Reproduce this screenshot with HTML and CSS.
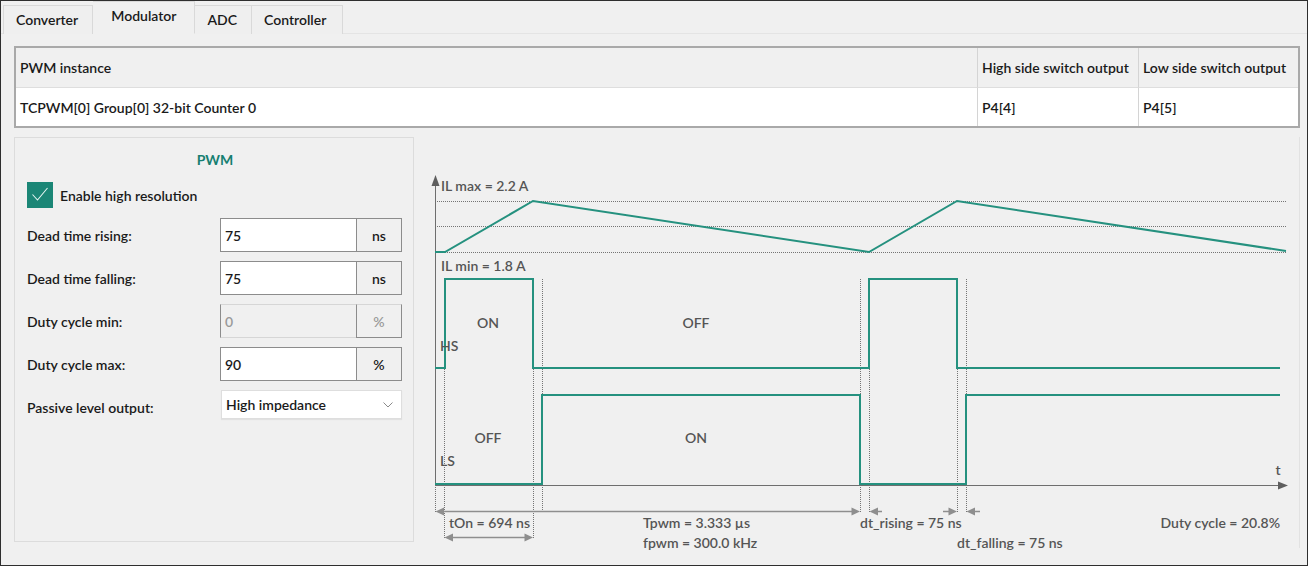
FILE: index.html
```html
<!DOCTYPE html>
<html>
<head>
<meta charset="utf-8">
<title>Modulator</title>
<link rel="stylesheet" href="styles.css">
</head>
<body>
<div class="window">
  <div class="tabbar">
    <div class="tab">Converter</div>
    <div class="tab active">Modulator</div>
    <div class="tab">ADC</div>
    <div class="tab">Controller</div>
  </div>
  <div class="pane">
    <table class="pwm-table">
      <colgroup><col class="c1"><col class="c2"><col class="c3"></colgroup>
      <thead>
        <tr><th>PWM instance</th><th>High side switch output</th><th>Low side switch output</th></tr>
      </thead>
      <tbody>
        <tr><td>TCPWM[0] Group[0] 32-bit Counter 0</td><td>P4[4]</td><td>P4[5]</td></tr>
      </tbody>
    </table>
    <div class="lower">
      <section class="group">
        <div class="group-title">PWM</div>
        <div class="check-row">
          <span class="checkbox"><svg width="26" height="26" viewBox="0 0 26 26"><polyline points="5.5,12.5 10.5,18 20.5,6" fill="none" stroke="#e6f5f2" stroke-width="1.1"/></svg></span>
          <span>Enable high resolution</span>
        </div>
        <div class="form">
          <div class="label">Dead time rising:</div>
          <div class="field"><div class="input">75</div><div class="unit">ns</div></div>
          <div class="label">Dead time falling:</div>
          <div class="field"><div class="input">75</div><div class="unit">ns</div></div>
          <div class="label">Duty cycle min:</div>
          <div class="field disabled"><div class="input">0</div><div class="unit">%</div></div>
          <div class="label">Duty cycle max:</div>
          <div class="field"><div class="input">90</div><div class="unit">%</div></div>
          <div class="label">Passive level output:</div>
          <div class="select"><span>High impedance</span><svg width="10" height="6" viewBox="0 0 10 6"><polyline points="0.5,0.5 5,5 9.5,0.5" fill="none" stroke="#8a8a8a" stroke-width="1"/></svg></div>
        </div>
      </section>
      <div class="chart">
        <svg class="plot" width="880" height="405" viewBox="420 137 880 405">
          <line class="frame" x1="1299.5" y1="137" x2="1299.5" y2="548"/>
          <!-- current limit lines -->
          <line class="dot" x1="435" y1="201.5" x2="1286" y2="201.5"/>
          <line class="dot" x1="435" y1="226.5" x2="1286" y2="226.5"/>
          <line class="dot" x1="435" y1="252.5" x2="1286" y2="252.5"/>
          <!-- timing markers -->
          <line class="dot" x1="435.5" y1="279" x2="435.5" y2="512"/>
          <line class="dot" x1="444.5" y1="279" x2="444.5" y2="538"/>
          <line class="dot" x1="533.5" y1="279" x2="533.5" y2="538"/>
          <line class="dot" x1="542.5" y1="279" x2="542.5" y2="512"/>
          <line class="dot" x1="860.5" y1="279" x2="860.5" y2="512"/>
          <line class="dot" x1="869.5" y1="279" x2="869.5" y2="512"/>
          <line class="dot" x1="957.5" y1="279" x2="957.5" y2="512"/>
          <line class="dot" x1="966.5" y1="279" x2="966.5" y2="512"/>
          <!-- axes -->
          <line class="axis" x1="435.5" y1="184" x2="435.5" y2="486"/>
          <polygon class="axhead" points="435.5,175 431.5,186 439.5,186"/>
          <line class="axis" x1="435" y1="485.5" x2="1279" y2="485.5"/>
          <polygon class="axhead" points="1288,485.5 1278,481.5 1278,489.5"/>
          <!-- signals -->
          <polyline class="sig" points="435,252 445,252 533,201 869,252 957,201 1286,251"/>
          <polyline class="sig" points="435,368 445,368 445,279 533,279 533,368 869,368 869,279 957,279 957,368 1280,368"/>
          <polyline class="sig" points="435,484 542,484 542,395 860,395 860,484 966,484 966,395 1280,395"/>
          <!-- dimension arrows -->
          <line class="arrow" x1="440" y1="511.5" x2="855" y2="511.5"/>
          <polygon class="ahead" points="435.5,511.5 444,507.5 444,515.5"/>
          <polygon class="ahead" points="860,511.5 851.5,507.5 851.5,515.5"/>
          <line class="arrow" x1="449" y1="537.5" x2="528" y2="537.5"/>
          <polygon class="ahead" points="444.5,537.5 453,533.5 453,541.5"/>
          <polygon class="ahead" points="533,537.5 524.5,533.5 524.5,541.5"/>
          <line class="arrow" x1="875" y1="511.5" x2="882" y2="511.5"/>
          <polygon class="ahead" points="869.5,511.5 878,507.5 878,515.5"/>
          <line class="arrow" x1="943" y1="511.5" x2="952" y2="511.5"/>
          <polygon class="ahead" points="957,511.5 948.5,507.5 948.5,515.5"/>
          <line class="arrow" x1="972" y1="511.5" x2="980" y2="511.5"/>
          <polygon class="ahead" points="966.5,511.5 975,507.5 975,515.5"/>
          <!-- labels -->
          <text class="lbl" x="441" y="191">IL max = 2.2 A</text>
          <text class="lbl" x="441" y="271">IL min = 1.8 A</text>
          <text class="lbl mid" x="488" y="328">ON</text>
          <text class="lbl mid" x="696" y="328">OFF</text>
          <text class="lbl" x="440" y="351">HS</text>
          <text class="lbl mid" x="488" y="443">OFF</text>
          <text class="lbl mid" x="696" y="443">ON</text>
          <text class="lbl" x="440" y="466">LS</text>
          <text class="lbl mid" x="1278" y="475">t</text>
          <text class="lbl" x="449" y="528">tOn = 694 ns</text>
          <text class="lbl" x="643" y="528">Tpwm = 3.333 µs</text>
          <text class="lbl" x="643" y="548">fpwm = 300.0 kHz</text>
          <text class="lbl" x="860" y="528">dt_rising = 75 ns</text>
          <text class="lbl" x="957" y="548">dt_falling = 75 ns</text>
          <text class="lbl end" x="1280" y="528">Duty cycle = 20.8%</text>
        </svg>
      </div>
    </div>
  </div>
</div>
</body>
</html>
```
FILE: styles.css
```css
* { box-sizing: border-box; }
html, body { margin: 0; padding: 0; background: #ffffff; }
body {
  font-family: "Lato", "Open Sans", "Liberation Sans", sans-serif;
  font-size: 14px;
  font-weight: 600;
  color: #1a1a1a;
}
.window {
  width: 1308px;
  height: 566px;
  border: 1px solid #2e2e2e;
  background: #f0f0f0;
  overflow: hidden;
}
.tabbar {
  display: flex;
  align-items: flex-end;
  height: 33px;
  padding-left: 2px;
  border-bottom: 1px solid #e4e4e4;
}
.tab {
  height: 29px;
  line-height: 28px;
  padding: 0 14px 0 12px;
  border: 1px solid #d9d9d9;
  border-bottom: none;
  border-left: none;
  background: #efefef;
  margin-bottom: -1px;
}
.tab:first-child { border-left: 1px solid #d9d9d9; }
.tab:last-child { padding-right: 16px; }
.tab.active {
  height: 33px;
  line-height: 28px;
  padding: 0 18px 4px;
  background: #f0f0f0;
  border-left: none;
  border-bottom: 1px solid #f0f0f0;
}
.pane {
  padding: 12px 7px 0 13px;
}
.pwm-table {
  width: 100%;
  table-layout: fixed;
  border-collapse: separate;
  border-spacing: 0;
  border: 2px solid #a9a9a9;
}
.pwm-table col.c2 { width: 161px; }
.pwm-table col.c3 { width: 160px; }
.pwm-table th, .pwm-table td {
  text-align: left;
  font-weight: 600;
  padding: 0 4px;
  white-space: nowrap;
}
.pwm-table th {
  height: 40px;
  background: #f0f0f0;
  border-bottom: 1px solid #dedede;
}
.pwm-table td {
  height: 38px;
  background: #ffffff;
}
.pwm-table th + th, .pwm-table td + td {
  border-left: 1px solid #d4d4d4;
}
.lower {
  display: flex;
  gap: 6px;
  margin-top: 9px;
  height: 405px;
}
.group {
  width: 400px;
  border: 1px solid #dcdcdc;
  padding: 0 10px 0 12px;
}
.group-title {
  margin-top: 11px;
  height: 22px;
  line-height: 22px;
  text-align: center;
  font-weight: 700;
  color: #167f71;
}
.check-row {
  display: flex;
  align-items: center;
  gap: 7px;
  margin-top: 11px;
  height: 26px;
}
.checkbox {
  width: 26px;
  height: 26px;
  background: #1b8676;
  display: block;
}
.checkbox svg { display: block; }
.form {
  margin-top: 10px;
  display: grid;
  grid-template-columns: 193px 182px;
  row-gap: 9px;
}
.label {
  height: 34px;
  display: flex;
  align-items: center;
}
.field {
  display: flex;
  height: 34px;
}
.input {
  width: 136px;
  background: #ffffff;
  border: 1px solid #8c8c8c;
  border-right: none;
  padding-left: 4px;
  display: flex;
  align-items: center;
}
.unit {
  width: 46px;
  border: 1px solid #8c8c8c;
  background: #f0f0f0;
  display: flex;
  align-items: center;
  justify-content: center;
}
.field.disabled .input {
  background: #f0f0f0;
  color: #9a9a9a;
  border-color: #d6d6d6;
  border-left-color: #8c8c8c;
}
.field.disabled .unit {
  color: #9a9a9a;
  border-top-color: #d6d6d6;
  border-left-color: #8c8c8c;
}
.select {
  height: 29px;
  margin-left: 1px;
  background: #ffffff;
  border: 1px solid #dedede;
  box-shadow: 0 1px 1px rgba(0,0,0,0.06);
  display: flex;
  align-items: center;
  justify-content: space-between;
  padding: 0 8px 0 4px;
}
.select svg { display: block; }
.chart {
  width: 880px;
}
.plot {
  display: block;
  overflow: visible;
}
.frame { stroke: #e2e2e2; stroke-width: 1; }
.dot { stroke: #747474; stroke-width: 1; stroke-dasharray: 1 1; fill: none; }
.axis { stroke: #6e6e6e; stroke-width: 1; }
.axhead { fill: #5e5e5e; }
.sig { stroke: #25917f; stroke-width: 2; fill: none; }
.arrow { stroke: #8e8e8e; stroke-width: 1.5; }
.ahead { fill: #8e8e8e; }
.lbl {
  fill: #555555;
  font-family: "Lato", "Open Sans", "Liberation Sans", sans-serif;
  font-size: 14px;
  font-weight: 600;
}
.lbl.mid { text-anchor: middle; }
.lbl.end { text-anchor: end; }
```
